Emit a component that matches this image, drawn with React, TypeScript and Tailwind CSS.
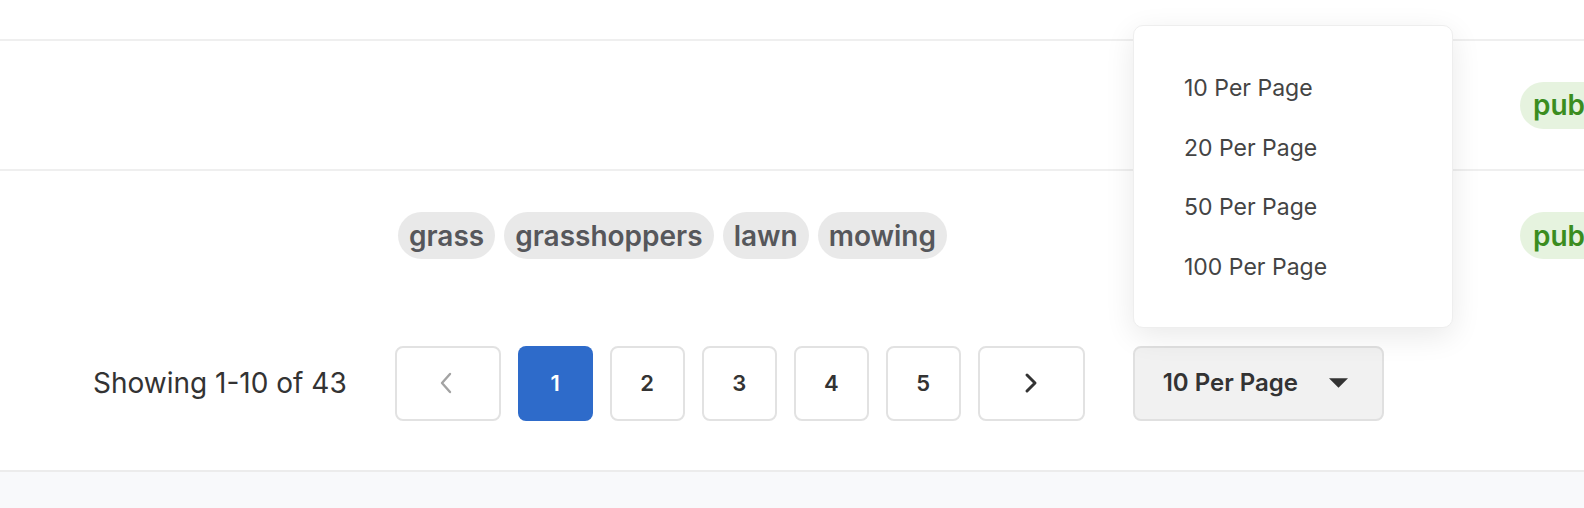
import React from 'react';

const tags = ['grass', 'grasshoppers', 'lawn', 'mowing'];
const pages = [1, 2, 3, 4, 5];
const perPageOptions = ['10 Per Page', '20 Per Page', '50 Per Page', '100 Per Page'];

const StatusBadge: React.FC = () => (
  <span className="inline-flex items-center h-[47px] pl-[13px] pr-4 rounded-full bg-[#e6f3df] text-[#3b8d1f] text-[28px] font-semibold whitespace-nowrap">
    published
  </span>
);

const ChevronLeft: React.FC<{ className?: string }> = ({ className }) => (
  <svg viewBox="0 0 14 22" className={className} fill="none" stroke="currentColor" strokeWidth={2.4} strokeLinecap="round" strokeLinejoin="round">
    <path d="M11 2L3 11l8 9" />
  </svg>
);

const ChevronRight: React.FC<{ className?: string }> = ({ className }) => (
  <svg viewBox="0 0 14 22" className={className} fill="none" stroke="currentColor" strokeWidth={3} strokeLinecap="round" strokeLinejoin="round">
    <path d="M3 3l8 8-8 8" />
  </svg>
);

const App: React.FC = () => {
  return (
    <div className="relative w-[1584px] h-[508px] bg-white overflow-hidden flex flex-col font-['Inter','Liberation_Sans',sans-serif]">
      {/* previous row tail */}
      <div className="h-[41px] flex-shrink-0 border-b-2 border-[#efefef]" />

      {/* row 1 */}
      <div className="h-[130px] flex-shrink-0 grid grid-cols-[398px_1122px_1fr] items-center border-b-2 border-[#efefef]">
        <div />
        <div />
        <div><StatusBadge /></div>
      </div>

      {/* row 2 */}
      <div className="h-[129px] flex-shrink-0 grid grid-cols-[398px_1122px_1fr] items-center">
        <div />
        <div className="flex items-center gap-[9px]">
          {tags.map((tag) => (
            <span key={tag} className="inline-flex items-center h-[47px] px-[11px] rounded-full bg-[#e9e9e9] text-[#56575b] text-[28px] font-semibold">
              {tag}
            </span>
          ))}
        </div>
        <div><StatusBadge /></div>
      </div>

      {/* pagination */}
      <div className="h-[170px] flex-shrink-0 flex items-center pl-[93px] pb-[4px]">
        <span className="text-[28px] text-[#333] mr-[48px] whitespace-nowrap">Showing 1-10 of 43</span>
        <div className="flex items-center gap-[17px]">
          <button className="w-[106px] h-[75px] rounded-[8px] border-2 border-[#e2e2e2] bg-white flex items-center justify-center text-[#a3a3a3]">
            <ChevronLeft className="w-[14px] h-[22px] -ml-[4px]" />
          </button>
          {pages.map((p) => (
            <button
              key={p}
              className={
                p === 1
                  ? 'w-[75px] h-[75px] rounded-[8px] bg-[#2e6bca] text-white text-[22px] font-semibold flex items-center justify-center'
                  : 'w-[75px] h-[75px] rounded-[8px] border-2 border-[#e2e2e2] bg-white text-[#333] text-[22px] font-semibold flex items-center justify-center'
              }
            >
              {p}
            </button>
          ))}
          <button className="w-[107px] h-[75px] rounded-[8px] border-2 border-[#e2e2e2] bg-white flex items-center justify-center text-[#333]">
            <ChevronRight className="w-[14px] h-[22px]" />
          </button>
        </div>
        <button className="ml-[48px] w-[251px] h-[75px] rounded-[8px] border-2 border-[#e0e0e0] bg-[#f1f1f1] flex items-center pl-[28px] text-[#333] text-[24px] font-semibold">
          10 Per Page
          <svg viewBox="0 0 20 10" className="w-[19px] h-[10px] ml-[31px]" fill="#333">
            <path d="M0 0h20L10 10z" />
          </svg>
        </button>
      </div>

      {/* footer */}
      <div className="flex-1 border-t-2 border-[#ececec] bg-[#f8f9fb]" />

      {/* per page menu */}
      <div className="absolute left-[1133px] top-[25px] w-[320px] h-[303px] bg-white rounded-[10px] border border-[#eeeeee] shadow-[0_8px_30px_rgba(0,0,0,0.09)] pt-[45px] pl-[50px] flex flex-col">
        {perPageOptions.map((opt) => (
          <div key={opt} className="h-[59.5px] flex items-start text-[23px] text-[#444]">
            {opt}
          </div>
        ))}
      </div>
    </div>
  );
};

export default App;
